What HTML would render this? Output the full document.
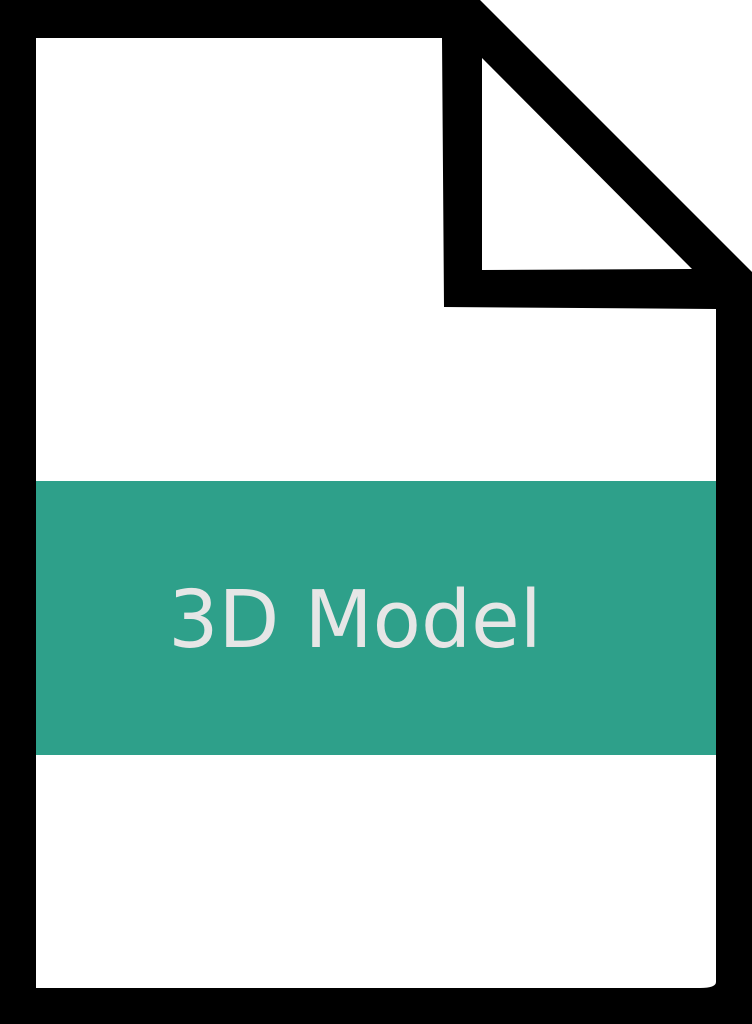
<!DOCTYPE html>
<html><head><meta charset="utf-8"><style>
html,body{margin:0;padding:0;background:#fff;}
svg{display:block;}
</style></head><body>
<svg width="752" height="1024" viewBox="0 0 752 1024" xmlns="http://www.w3.org/2000/svg">
<path d="M0 0 H480 L752 272 V1024 H0 Z" fill="#000"/>
<path d="M36 38 H442 L444 307 L716 309 V982 Q716 988 700 988 H36 Z" fill="#fff"/>
<path d="M482 58 L482 270 L692 269 Z" fill="#fff"/>
<rect x="36" y="481" width="680" height="274" fill="#2ea08a"/>
<text x="355" y="647" text-anchor="middle" font-family="DejaVu Sans, sans-serif" font-size="79" fill="#e6e6e6">3D Model</text>
</svg>
</body></html>
